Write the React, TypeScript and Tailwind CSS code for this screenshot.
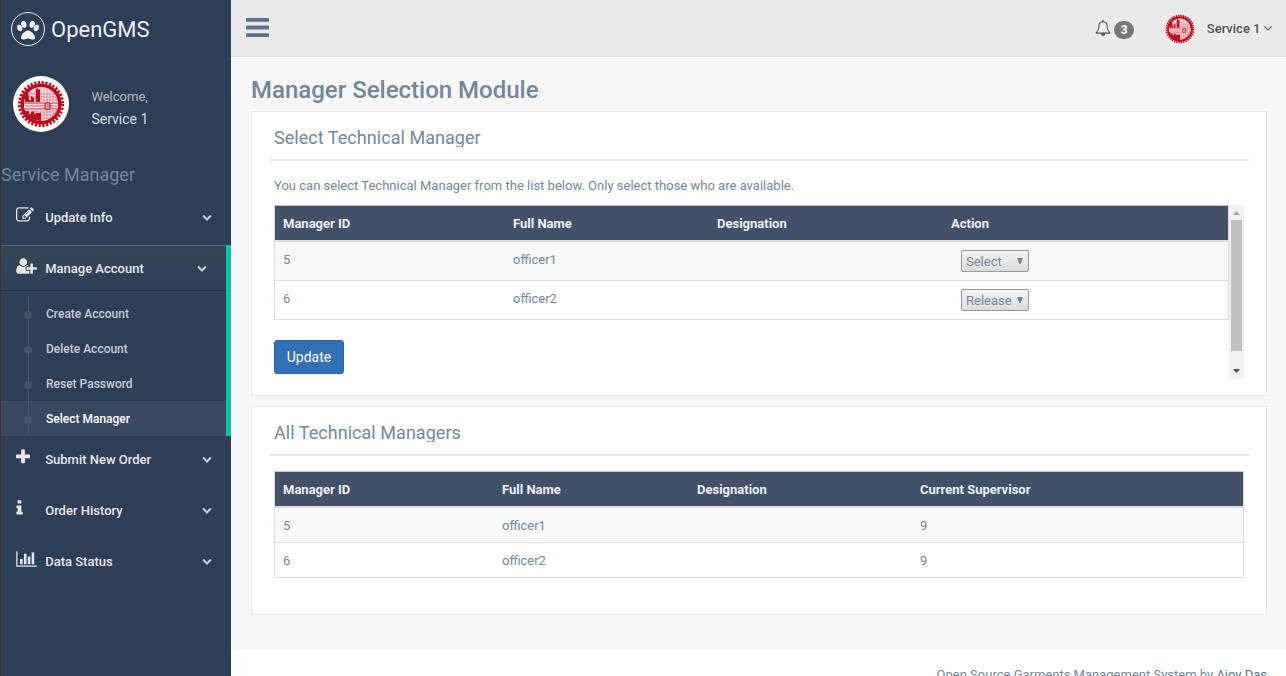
import React from "react";

type GlyphProps = { d: string; viewBox: string; className?: string };

function Glyph({ d, viewBox, className }: GlyphProps) {
  return (
    <svg viewBox={viewBox} className={className} fill="currentColor" aria-hidden="true">
      <path d={d} />
    </svg>
  );
}

const BARS =
  "M1664 1344v128q0 26-19 45t-45 19h-1408q-26 0-45-19t-19-45v-128q0-26 19-45t45-19h1408q26 0 45 19t19 45zm0-512v128q0 26-19 45t-45 19h-1408q-26 0-45-19t-19-45v-128q0-26 19-45t45-19h1408q26 0 45 19t19 45zm0-512v128q0 26-19 45t-45 19h-1408q-26 0-45-19t-19-45v-128q0-26 19-45t45-19h1408q26 0 45 19t19 45z";
const PLUS =
  "M1600 736v192q0 40-28 68t-68 28h-416v416q0 40-28 68t-68 28h-192q-40 0-68-28t-28-68v-416h-416q-40 0-68-28t-28-68v-192q0-40 28-68t68-28h416v-416q0-40 28-68t68-28h192q40 0 68 28t28 68v416h416q40 0 68 28t28 68z";
const INFO =
  "M1216 1344v128q0 26-19 45t-45 19h-512q-26 0-45-19t-19-45v-128q0-26 19-45t45-19h64v-384h-64q-26 0-45-19t-19-45v-128q0-26 19-45t45-19h384q26 0 45 19t19 45v576h64q26 0 45 19t19 45zm-128-1152v192q0 26-19 45t-45 19h-256q-26 0-45-19t-19-45v-192q0-26 19-45t45-19h256q26 0 45 19t19 45z";
const CHART =
  "M640 896v512h-256v-512h256zm384-512v1024h-256v-1024h256zm1024 1152v128h-2048v-1536h128v1408h1920zm-640-896v768h-256v-768h256zm384-384v1152h-256v-1152h256z";
const EDIT =
  "M888 1184l116-116-152-152-116 116v56h96v96h56zm440-720q-16-16-33 1l-350 350q-17 17-1 33t33-1l350-350q17-17 1-33zm80 594v190q0 119-84.5 203.5t-203.5 84.5h-832q-119 0-203.5-84.5t-84.5-203.5v-832q0-119 84.5-203.5t203.5-84.5h832q63 0 117 25 15 7 18 23 3 17-9 29l-49 49q-14 14-32 8-23-6-45-6h-832q-66 0-113 47t-47 113v832q0 66 47 113t113 47h832q66 0 113-47t47-113v-126q0-13 9-22l64-64q15-15 35-7t20 29zm-96-738l288 288-672 672h-288v-288zm444 132l-92 92-288-288 92-92q28-28 68-28t68 28l152 152q28 28 28 68t-28 68z";
const USER_PLUS =
  "M704 896q-159 0-271.5-112.5t-112.5-271.5 112.5-271.5 271.5-112.5 271.5 112.5 112.5 271.5-112.5 271.5-271.5 112.5zm960 128h352q13 0 22.5 9.5t9.5 22.5v192q0 13-9.5 22.5t-22.5 9.5h-352v352q0 13-9.5 22.5t-22.5 9.5h-192q-13 0-22.5-9.5t-9.5-22.5v-352h-352q-13 0-22.5-9.5t-9.5-22.5v-192q0-13 9.5-22.5t22.5-9.5h352v-352q0-13 9.5-22.5t22.5-9.5h192q13 0 22.5 9.5t9.5 22.5v352zm-736 224q0 52 38 90t90 38h256v238q-68 50-171 50h-874q-121 0-194-69t-73-190q0-53 3.5-103.5t14-109 26.5-108.5 43-97.5 62-81 85.5-53.5 111.5-20q19 0 39 17 79 61 154.5 91.5t164.5 30.5 164.5-30.5 154.5-91.5q20-17 39-17 132 0 217 96h-223q-52 0-90 38t-38 90v192z";
const BELL =
  "M912 1696q0-16-16-16-59 0-101.5-42.5t-42.5-101.5q0-16-16-16t-16 16q0 73 51.5 124.5t124.5 51.5q16 0 16-16zm-666-288h1300q-266-300-266-832 0-51-24-105t-69-103-121.5-80.5-169.5-31.5-169.5 31.5-121.5 80.5-69 103-24 105q0 532-266 832zm1482 0q0 52-38 90t-90 38h-448q0 106-75 181t-181 75-181-75-75-181h-448q-52 0-90-38t-38-90q50-42 91-88t85-119.5 74.5-158.5 50-206 19.5-260q0-152 117-282.5t307-158.5q-8-19-8-39 0-40 28-68t68-28 68 28 28 68q0 20-8 39 190 28 307 158.5t117 282.5q0 139 19.5 260t50 206 74.5 158.5 85 119.5 91 88z";
const PAW =
  "M780 563q0 60-19 113.5t-63 92.5-105 39q-76 0-138-57.5t-92-135.5-30-151q0-60 19-113.5t63-92.5 105-39q77 0 138.5 57.5t91.5 135 30 151.5zm-342 318q0 80-42 139t-119 59q-76 0-141.5-55.5t-100.5-133.5-35-152q0-80 42-139.5t119-59.5q76 0 141.5 55.5t100.5 134 35 152.5zm458 141q118 0 255 97.5t229 237 92 254.5q0 46-17 76.5t-48.5 45-64.5 20-76 5.5q-68 0-187.5-45t-182.5-45q-66 0-192.5 44.5t-200.5 44.5q-183 0-183-146 0-86 56-191.5t139.5-192.5 187.5-146 193-59zm303-214q-61 0-105-39t-63-92.5-19-113.5q0-74 30-151.5t91.5-135 138.5-57.5q61 0 105 39t63 92.5 19 113.5q0 73-30 151t-92 135.5-138 57.5zm432-269q77 0 119 59.5t42 139.5q0 74-35 152t-100.5 133.5-141.5 55.5q-77 0-119-59t-42-139q0-74 35-152.5t100.5-134 141.5-55.5z";
const ANGLE_DOWN =
  "M1395 736q0 13-10 23l-466 466q-10 10-23 10t-23-10l-466-466q-10-10-10-23t10-23l50-50q10-10 23-10t23 10l393 393 393-393q10-10 23-10t23 10l50 50q10 10 10 23z";
const CHEVRON_DOWN =
  "M1683 808l-742 741q-19 19-45 19t-45-19l-742-741q-19-19-19-45.5t19-45.5l166-165q19-19 45-19t45 19l531 531 531-531q19-19 45-19t45 19l166 165q19 19 19 45.5t-19 45.5z";

function Seal({ className }: { className?: string }) {
  return (
    <svg viewBox="0 0 48 48" className={className} aria-hidden="true">
      <circle cx="24" cy="24" r="20.6" fill="#bd0a1c" />
      <circle cx="24" cy="24" r="21.6" fill="none" stroke="#bd0a1c" strokeWidth="2.9" strokeDasharray="2.2 1.57" />
      <circle cx="24" cy="24" r="17" fill="#fbe9eb" />
      <path
        d="M12 12v24M15 10v28M18 8v32M21 7v34M24 7v34M27 7v34M30 8v32M33 10v28M36 12v24M39 16v16M10 14h28M8 17h32M7 20h34M7 23h34M7 26h34M7 29h34M8 32h32M10 35h28M14 38h20"
        stroke="#dd7a84"
        strokeWidth="0.8"
      />
      <path d="M8 22V16l3-4 1 8 2 1v-5l3 2v4h2V9l2-1v2l2-1v13z" fill="#bd0a1c" />
      <path d="M8 31h4v3h2v-2l3-1v3l3-1h4v8c-7 0-14-4-16-10z" fill="#bd0a1c" />
      <path d="M7 23h34v6H7z" fill="#f8e2e4" />
      <path d="M7 23.3h21M7 28.7h21M9 26h18M32 23.3h9M32 28.7h9M33 26h7" stroke="#cf3e4b" strokeWidth="0.8" />
      <rect x="28" y="22.6" width="5" height="7" rx="1.6" fill="#e58e96" stroke="#bd0a1c" strokeWidth="1" />
    </svg>
  );
}

type MenuRowProps = { label: string; icon: React.ReactNode; active?: boolean };

function MenuRow({ label, icon, active }: MenuRowProps) {
  return (
    <a
      className={
        active
          ? "flex h-[46px] items-center border-y border-t-[#56657a] border-b-[#232f40] bg-linear-to-b from-[#354656] to-[#2e4058] pr-[19.5px] pl-[15px]"
          : "flex h-[46px] items-center pr-[19.5px] pl-[15px]"
      }
    >
      <span className="flex w-[29.2px] pb-[3.5px] text-[#e7e7e7]">{icon}</span>
      <span className="grow pt-[2px] text-[13px] font-medium text-[#e7e7e7]">{label}</span>
      <Glyph d={CHEVRON_DOWN} viewBox="0 0 1792 1792" className="size-[10px] text-[#c4cfda]" />
    </a>
  );
}

function SubItem({ label, active }: { label: string; active?: boolean }) {
  return (
    <li className={active ? "flex h-[35px] items-center bg-[#3a495f]" : "flex h-[35px] items-center"}>
      <span className="flex w-[45px] self-stretch pl-[27px]">
        <span className="relative flex w-px self-stretch bg-[#425668]">
          <span className="absolute top-[15px] -left-1 size-2 rounded-full bg-[#425668]" />
        </span>
      </span>
      <span className={active ? "text-xs font-medium text-white" : "text-xs font-medium text-[#c8cdd3]"}>{label}</span>
    </li>
  );
}

function Sidebar() {
  return (
    <aside className="flex w-[231px] shrink-0 flex-col border-l border-[#38342f] bg-[#2f3e57]">
      <div className="flex h-[57px] items-center pl-[10px]">
        <span className="flex size-[34px] items-center justify-center rounded-full border border-[#eaeaea] text-[#ecf0f1]">
          <Glyph d={PAW} viewBox="0 0 1792 1792" className="size-[22px]" />
        </span>
        <span className="ml-[6px] pt-[2px] text-[22px] text-[#ecf0f1]">OpenGMS</span>
      </div>
      <div className="flex pt-[19px] pl-3">
        <span className="flex size-14 items-center justify-center rounded-full bg-white">
          <Seal className="size-[48px]" />
        </span>
        <div className="flex flex-col pt-[11px] pl-[22.4px]">
          <span className="text-[13px] leading-[20px] text-[#bab8b8]">Welcome,</span>
          <h2 className="pt-[2px] text-sm leading-[20px] text-[#ecf0f1]/90">Service 1</h2>
        </div>
      </div>
      <h3 className="flex h-[62px] items-end pb-[6px] text-lg leading-[26px] text-[#73879c]">Service Manager</h3>
      <nav className="flex flex-col">
        <div className="h-[51px]">
          <MenuRow
            label="Update Info"
            icon={<Glyph d={EDIT} viewBox="0 0 1792 1792" className="size-[18px]" />}
          />
        </div>
        <div className="flex flex-col border-r-[5px] border-[#0bc3a1]">
          <div className="h-[51px]">
            <MenuRow
              label="Manage Account"
              active
              icon={<Glyph d={USER_PLUS} viewBox="0 0 2048 1792" className="h-[18px] w-[21px]" />}
            />
          </div>
          <ul>
            <SubItem label="Create Account" />
            <SubItem label="Delete Account" />
            <SubItem label="Reset Password" />
            <SubItem label="Select Manager" active />
          </ul>
        </div>
        <div className="h-[51px]">
          <MenuRow
            label="Submit New Order"
            icon={<Glyph d={PLUS} viewBox="192 0 1408 1792" className="h-[18px] w-[14px]" />}
          />
        </div>
        <div className="h-[51px]">
          <MenuRow
            label="Order History"
            icon={<Glyph d={INFO} viewBox="576 0 640 1792" className="h-[18px] w-[7px]" />}
          />
        </div>
        <div className="h-[51px]">
          <MenuRow
            label="Data Status"
            icon={<Glyph d={CHART} viewBox="0 0 2048 1792" className="h-[18px] w-[21px]" />}
          />
        </div>
      </nav>
    </aside>
  );
}

function TopBar() {
  return (
    <header className="flex h-[57px] shrink-0 items-center border-b border-[#d9dbe4] bg-[#ebebeb] pr-[14px] pl-[15px] text-[#515356]">
      <Glyph d={BARS} viewBox="128 0 1536 1792" className="mb-px h-[27px] w-[23px] text-[#5a738e]" />
      <div className="grow" />
      <Glyph d={BELL} viewBox="0 0 1792 1792" className="size-4" />
      <span className="mt-[3px] ml-[3px] flex h-[18px] w-5 items-center justify-center rounded-full bg-[#777777] text-xs font-bold text-white">
        3
      </span>
      <Seal className="mt-[2px] ml-[31px] size-[30px]" />
      <span className="ml-[11.5px] pt-px text-[13px] font-medium">Service 1</span>
      <Glyph d={ANGLE_DOWN} viewBox="384 0 1024 1792" className="ml-[3.5px] h-[14px] w-2" />
    </header>
  );
}

function PanelTitle({ children }: { children: React.ReactNode }) {
  return (
    <div className="mx-[17px] flex h-[49px] items-start border-b-2 border-[#e6e9ed] pt-4 pl-[5px]">
      <h2 className="h-[19px] overflow-hidden text-lg leading-[20px] tracking-[0.04px]">{children}</h2>
    </div>
  );
}

function HeadRow({ labels }: { labels: string[] }) {
  return (
    <thead>
      <tr className="h-[36px] bg-[#425168] text-left text-[#ecf0f1]">
        {labels.map((label) => (
          <th key={label} className="border-b-2 border-[#dddddd] px-2 pt-[2px] font-bold">
            {label}
          </th>
        ))}
      </tr>
    </thead>
  );
}

function ActionSelect({ value }: { value: string }) {
  return (
    <button className="ml-[10px] flex h-[22px] w-[68px] items-center justify-between rounded-[2px] border border-[#999999] bg-linear-to-b from-[#f4f4f4] to-[#dcdcdc] pr-[5px] pl-1 text-[13px]">
      <span>{value}</span>
      <svg viewBox="0 0 6 6" className="mb-px size-[6px]" fill="currentColor" aria-hidden="true">
        <path d="M0 0h6L3.6 6H2.4z" />
      </svg>
    </button>
  );
}

function SelectTable() {
  const rows = [
    { id: "5", name: "officer1", action: "Select" },
    { id: "6", name: "officer2", action: "Release" },
  ];
  return (
    <table className="w-[955px] table-fixed border-separate border-spacing-0 border border-b-0 border-[#dddddd] border-t-[#c3c6ca]">
      <colgroup>
        <col className="w-[230px]" />
        <col className="w-[204px]" />
        <col className="w-[234px]" />
        <col />
      </colgroup>
      <HeadRow labels={["Manager ID", "Full Name", "Designation", "Action"]} />
      <tbody>
        {rows.map((row) => (
          <tr key={row.id} className="h-[39px] align-top leading-[19px] odd:bg-[#f9f9f9]">
            <td className="border-b border-[#dddddd] px-2 pt-2">{row.id}</td>
            <td className="border-b border-[#dddddd] px-2 pt-2">{row.name}</td>
            <td className="border-b border-[#dddddd] px-2 pt-2" />
            <td className="border-b border-[#dddddd] px-2 pt-2">
              <ActionSelect value={row.action} />
            </td>
          </tr>
        ))}
      </tbody>
    </table>
  );
}

function ManagersTable() {
  const rows = [
    { id: "5", name: "officer1", supervisor: "9" },
    { id: "6", name: "officer2", supervisor: "9" },
  ];
  return (
    <table className="w-[970px] table-fixed border-separate border-spacing-0 border border-b-0 border-[#dddddd] border-t-[#c3c6ca]">
      <colgroup>
        <col className="w-[219px]" />
        <col className="w-[195px]" />
        <col className="w-[223px]" />
        <col />
      </colgroup>
      <HeadRow labels={["Manager ID", "Full Name", "Designation", "Current Supervisor"]} />
      <tbody>
        {rows.map((row) => (
          <tr key={row.id} className="h-[35px] align-top leading-[19px] odd:bg-[#f9f9f9]">
            <td className="border-b border-[#dddddd] px-2 pt-2">{row.id}</td>
            <td className="border-b border-[#dddddd] px-2 pt-2">{row.name}</td>
            <td className="border-b border-[#dddddd] px-2 pt-2" />
            <td className="border-b border-[#dddddd] px-2 pt-2">{row.supervisor}</td>
          </tr>
        ))}
      </tbody>
    </table>
  );
}

function ScrollBar() {
  return (
    <div className="flex w-[15px] flex-col items-center bg-[#f1f1f1]">
      <svg viewBox="0 0 15 15" className="size-[15px] shrink-0" aria-hidden="true">
        <path d="M4 10h7L7.5 6z" fill="#a3a3a3" />
      </svg>
      <div className="h-[131px] w-[11px] bg-[#c1c1c1]" />
      <div className="grow" />
      <svg viewBox="0 0 15 15" className="size-[15px] shrink-0" aria-hidden="true">
        <path d="M4 5h7L7.5 9z" fill="#505050" />
      </svg>
    </div>
  );
}

export default function App() {
  return (
    <div className="flex h-[676px] w-[1286px] overflow-hidden bg-white font-['Roboto',sans-serif] text-[13px] text-[#73879c]">
      <Sidebar />
      <div className="flex grow flex-col">
        <TopBar />
        <main className="flex h-[593px] shrink-0 flex-col bg-[#f7f7f7] pr-[19px] pl-5">
          <h1 className="flex h-[54px] items-center pt-3 text-2xl font-medium">Manager Selection Module</h1>
          <section className="h-[285px] shrink-0 border border-[#e6e9ed] bg-white">
            <PanelTitle>Select Technical Manager</PanelTitle>
            <p className="flex h-[44px] items-center pt-[5px] pl-[22px] tracking-[0.01px]">
              You can select Technical Manager from the list below. Only select those who are available.
            </p>
            <div className="ml-[22px] flex h-[174px] w-[970px]">
              <div className="w-[955px]">
                <SelectTable />
                <button className="mt-5 flex h-[34px] w-[70px] items-center justify-center rounded-[3px] border border-[#2e64a5] bg-[#3170b9] text-sm text-white">
                  Update
                </button>
              </div>
              <ScrollBar />
            </div>
          </section>
          <section className="mt-[10px] h-[209px] shrink-0 border border-[#e6e9ed] bg-white">
            <PanelTitle>All Technical Managers</PanelTitle>
            <div className="pt-[15px] pl-[22px]">
              <ManagersTable />
            </div>
          </section>
        </main>
        <footer className="flex shrink-0 justify-end bg-white pt-[15px] pr-[19px] leading-[19px]">
          <span>
            Open Source Garments Management System by <a className="text-[#5a738e]">Ajoy Das</a>
          </span>
        </footer>
      </div>
    </div>
  );
}
